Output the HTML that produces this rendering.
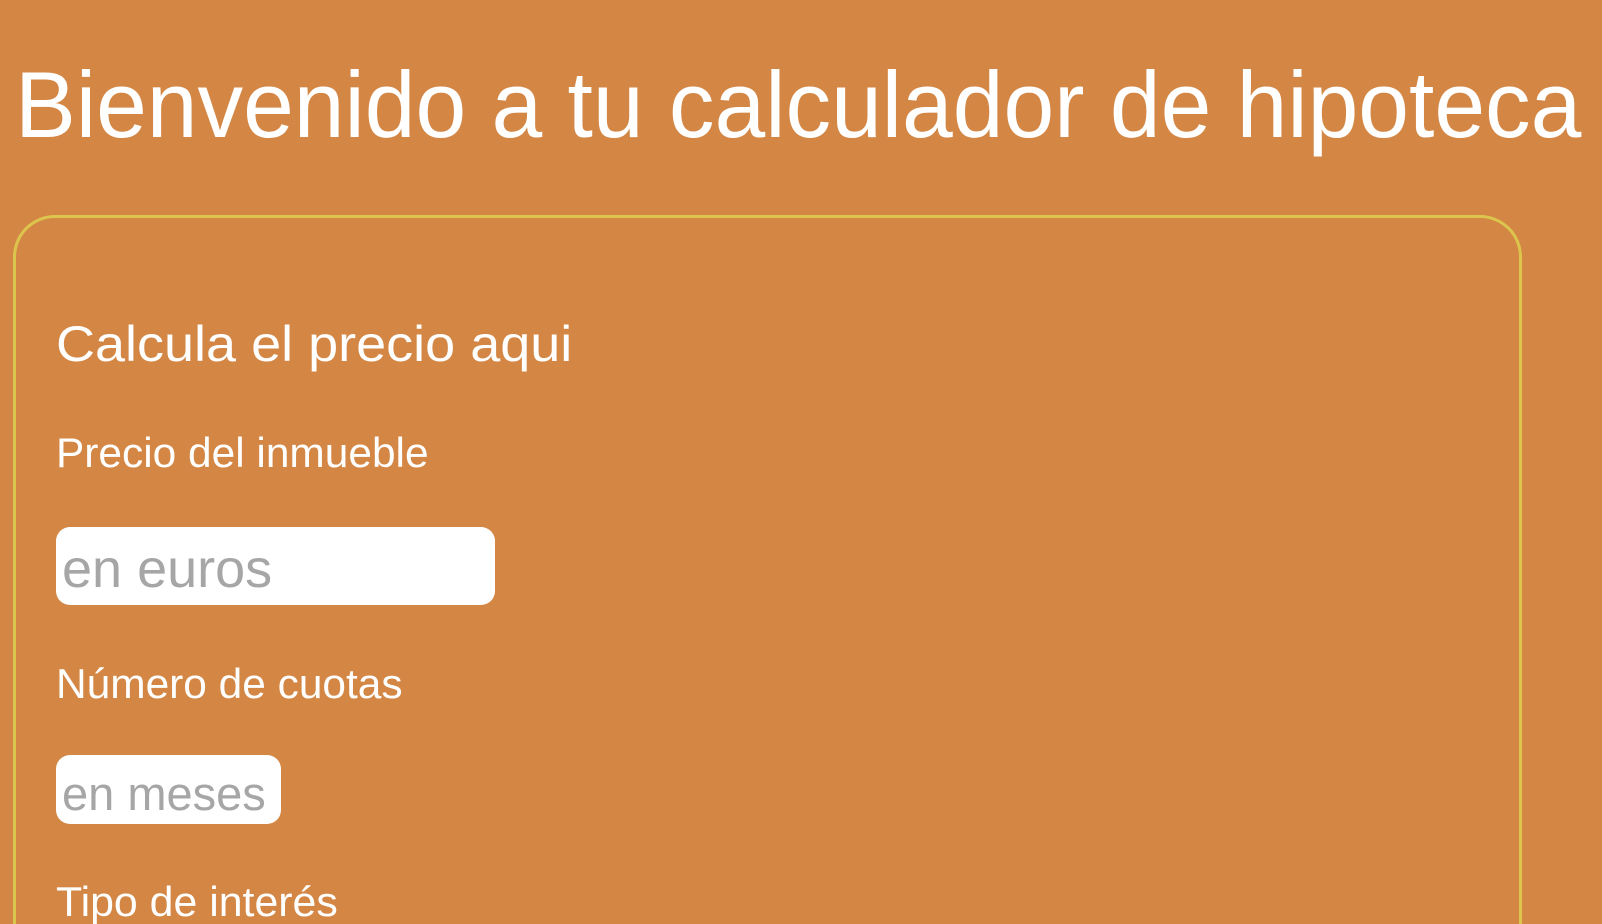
<!DOCTYPE html>
<html><head><meta charset="utf-8"><style>
html,body{margin:0;padding:0;width:1602px;height:924px;overflow:hidden;}
body{background:#d48745;font-family:"Liberation Sans",sans-serif;color:#fff;}
.wrap{position:relative;width:1602px;height:924px;overflow:hidden;}
.t{position:absolute;line-height:1;white-space:nowrap;transform-origin:left top;}
.box{position:absolute;left:13px;top:215px;width:1509px;height:800px;border:3px solid #dcc54d;border-radius:42px;box-sizing:border-box;}
.in{position:absolute;background:#fff;border-radius:14px;}
.ph{color:#a6a6a6;}
</style></head><body><div class="wrap">
<div class="t" style="left:15px;top:58px;font-size:94px;transform:scaleX(0.97)">Bienvenido a tu calculador de hipoteca</div>
<div class="box"></div>
<div class="t" style="left:56px;top:319px;font-size:50px;transform:scaleX(1.08)">Calcula el precio aqui</div>
<div class="t" style="left:56px;top:432px;font-size:42px;transform:scaleX(1.01)">Precio del inmueble</div>
<div class="in" style="left:56px;top:527px;width:439px;height:78px"></div>
<div class="t ph" style="left:62px;top:542px;font-size:54px">en euros</div>
<div class="t" style="left:56px;top:663px;font-size:42px;transform:scaleX(1.01)">Número de cuotas</div>
<div class="in" style="left:56px;top:755px;width:225px;height:69px"></div>
<div class="t ph" style="left:62px;top:770px;font-size:47px">en meses</div>
<div class="t" style="left:56px;top:881px;font-size:42px;transform:scaleX(1.02)">Tipo de interés</div>
</div></body></html>
